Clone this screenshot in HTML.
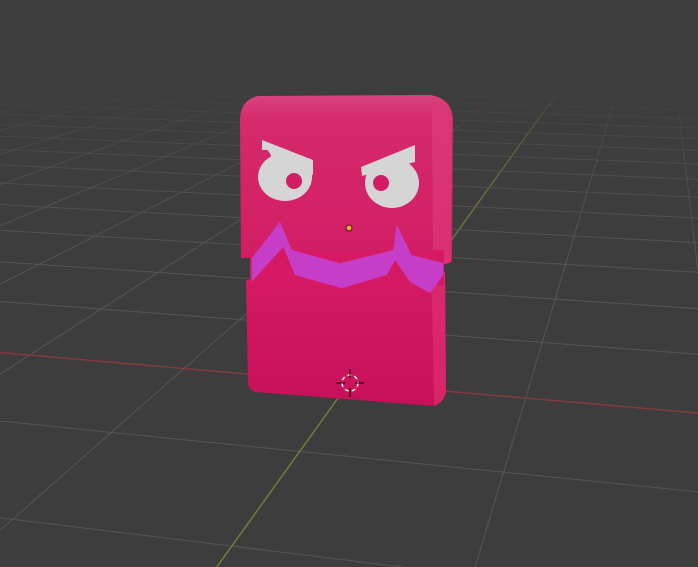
<!DOCTYPE html>
<html><head><meta charset="utf-8"><style>
html,body{margin:0;padding:0;background:#3d3d3d;width:698px;height:567px;overflow:hidden}
svg{position:absolute;left:0;top:0;overflow:hidden}
</style></head><body>
<svg id="g" width="698" height="567" viewBox="0 0 698 567"></svg>
<svg width="698" height="567" viewBox="0 0 698 567">
<defs>
<linearGradient id="top" x1="0" y1="0" x2="0" y2="1"><stop offset="0" stop-color="#d8447e"/><stop offset="0.15" stop-color="#d52a6c"/><stop offset="1" stop-color="#d21c63"/></linearGradient>
<linearGradient id="low" x1="0" y1="0" x2="0" y2="1"><stop offset="0" stop-color="#d61a64"/><stop offset="1" stop-color="#c8105a"/></linearGradient>
</defs>
<path d="M246,280 L445,272 L446,392 Q444,402 434,406 L256,392 Q248,390 248,382 Z" fill="url(#low)"/>
<path d="M430,274 L445,272 L446,392 Q444,402 434,406 L432,300 Z" fill="#dc2a6e" opacity="0.8"/>
<path d="M240,118 Q241,100 258,96 L430,95 Q451,98 453,118 L452,262 L432,268 L250,258 L241,258 Z" fill="url(#top)"/>
<path d="M432,108 Q448,104 452,118 L451,262 L433,268 Z" fill="#dc3a78" opacity="0.7"/>
<polygon points="250,250 444,250 444,285 250,285" fill="#d51a63"/>
<polygon points="251.7,258.3 280,221.7 291.7,250 340,263.3 393.3,250 396.7,225 411.7,255 443.3,263.3 443.3,275 430,293.3 410,281.7 395,260 386.7,275 341.7,288.3 295,275 283.3,246.7 251.7,281.7" fill="#c63ec8"/>
<ellipse cx="285" cy="177" rx="27" ry="24" fill="#d5d5d5"/>
<polygon points="262,142 313,164 313,175 296,168 270,162 271,155" fill="#d5d5d5"/>
<path d="M262,150 Q290,148 313,172 L313,160 L262,140 Z" fill="#d5d5d5"/>
<circle cx="294" cy="181" r="8" fill="#d21c63"/>
<ellipse cx="392" cy="183" rx="27" ry="25" fill="#d5d5d5"/>
<polygon points="415,145 415,162 392,168 362,176 361,167" fill="#d5d5d5"/>
<circle cx="381" cy="183" r="8" fill="#d21c63"/>
<circle cx="349" cy="228" r="3" fill="#f5a83a" stroke="#3a1a10" stroke-width="1"/>
<circle cx="350" cy="383" r="8" fill="none" stroke="#ffffff" stroke-width="1.5" stroke-dasharray="4 3"/>
<circle cx="350" cy="383" r="8" fill="none" stroke="#e03030" stroke-width="1.5" stroke-dasharray="3 4" stroke-dashoffset="3.5"/>
<path d="M350,369 V378 M350,388 V397 M336,383 H345 M355,383 H364" stroke="#000" stroke-width="1"/>
</svg>
<script>
(function(){
var th=-14*Math.PI/180, ph=15.5*Math.PI/180, f=1200, D=12, cx0=349, cy0=283;
var fw=[Math.cos(ph)*Math.sin(th),Math.cos(ph)*Math.cos(th),-Math.sin(ph)];
var rt=[Math.cos(th),-Math.sin(th),0];
var up=[Math.sin(th)*Math.sin(ph),Math.cos(th)*Math.sin(ph),Math.cos(ph)];
var tg=[0,0,1.06];
var cam=[tg[0]-D*fw[0],tg[1]-D*fw[1],tg[2]-D*fw[2]];
function P(x,y){var v=[x-cam[0],y-cam[1],-cam[2]];
 var xc=v[0]*rt[0]+v[1]*rt[1]+v[2]*rt[2], yc=v[0]*up[0]+v[1]*up[1]+v[2]*up[2], zc=v[0]*fw[0]+v[1]*fw[1]+v[2]*fw[2];
 return [cx0+f*xc/zc, cy0-f*yc/zc, zc];}
function op(x,y){var d=Math.hypot(x-cam[0],y-cam[1]);return Math.max(0,Math.min(1,(40-d)/24));}
var s='';var N=40,st=0.5,G=1.8;
function seg(x1,y1,x2,y2,col,w,base){var a=P(x1,y1),b=P(x2,y2);if(a[2]<0.5||b[2]<0.5)return;
 var o=op((x1+x2)/2,(y1+y2)/2)*base; if(o<=0.01)return;
 s+='<line x1="'+a[0].toFixed(1)+'" y1="'+a[1].toFixed(1)+'" x2="'+b[0].toFixed(1)+'" y2="'+b[1].toFixed(1)+'" stroke="'+col+'" stroke-width="'+w+'" stroke-opacity="'+o.toFixed(2)+'"/>';}
for(var i=-22;i<=22;i++){for(var t=-N;t<N;t+=st){
 var c=i*G;
 if(i!==0){seg(c,t,c,t+st,'#565656',1,1);seg(t,c,t+st,c,'#565656',1,1);}
 else{seg(0,t,0,t+st,'#6f8a3a',1.3,1);seg(t,0,t+st,0,'#8a3a42',1.3,1);}
}}
document.getElementById('g').innerHTML=s;
})();
</script>
</body></html>
